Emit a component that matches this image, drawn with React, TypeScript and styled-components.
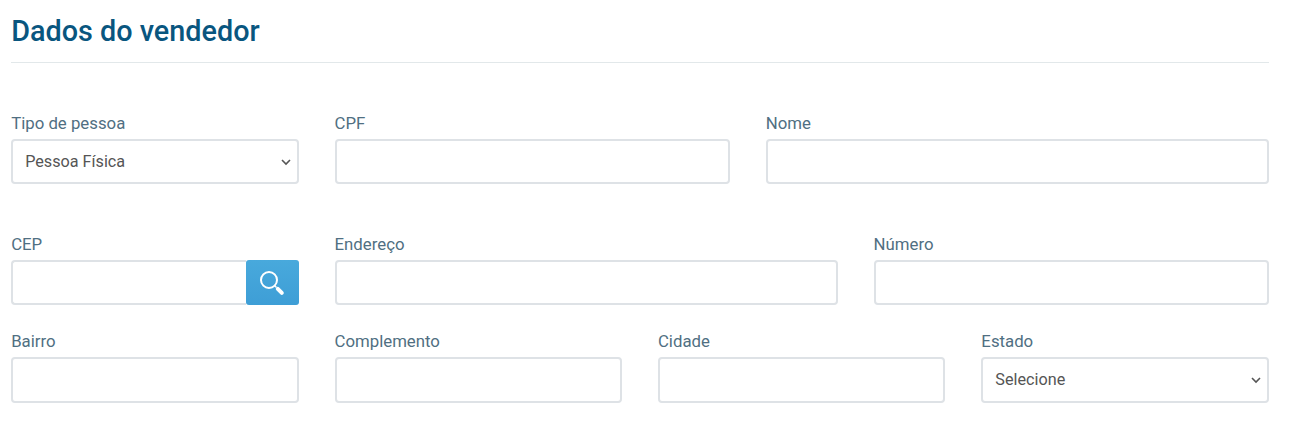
import React from "react";
import styled, { createGlobalStyle, css } from "styled-components";

const Global = createGlobalStyle`
  * { box-sizing: border-box; }
  body { margin: 0; background: #fff; font-family: Roboto, "Liberation Sans", sans-serif; }
`;

const Page = styled.main`
  width: 1294px;
  height: 445px;
  padding: 0 25.25px 0 11.15px;
  overflow: hidden;
`;

const Title = styled.h1`
  margin: 0;
  height: 63px;
  padding-top: 13px;
  border-bottom: 1px solid #e2e8ea;
  font-size: 28.8px;
  font-weight: 500;
  line-height: 36px;
  color: #09567f;
`;

const Row = styled.div<{ $top: number }>`
  display: grid;
  grid-template-columns: repeat(12, minmax(0, 1fr));
  column-gap: 36px;
  margin-top: ${(p) => p.$top}px;
`;

const Field = styled.div<{ $span: number }>`
  grid-column: span ${(p) => p.$span};
  display: flex;
  flex-direction: column;
  min-width: 0;
`;

const Label = styled.label`
  height: 27px;
  font-size: 16.8px;
  line-height: 22px;
  color: #506f82;
`;

const box = css`
  width: 100%;
  height: 45.4px;
  border: 2px solid #dee2e6;
  border-radius: 4px;
  background: #fff;
  font: 400 16.2px/24px Roboto, sans-serif;
  color: #555;
  outline: none;
`;

const Input = styled.input`
  ${box}
  padding: 0 12px;
`;

const SelectWrap = styled.div`
  display: grid;
  align-items: center;
  & > * { grid-area: 1 / 1; }
`;

const SelectBox = styled.select`
  ${box}
  appearance: none;
  padding: 0 12px;
`;

const Chevron = styled.svg`
  justify-self: end;
  margin-right: 8px;
  pointer-events: none;
`;

const SearchGroup = styled.div`
  display: flex;
`;

const GroupInput = styled(Input)`
  flex: 1;
  min-width: 0;
  border-right: 0;
  border-radius: 4px 0 0 4px;
`;

const SearchButton = styled.button`
  display: flex;
  align-items: center;
  justify-content: center;
  width: 53px;
  height: 45px;
  padding: 1px 1px 0 0;
  border: 0;
  border-radius: 3px;
  background: linear-gradient(#48a9dc, #3e9ed6);
`;

function TextField({ label, span }: { label: string; span: number }) {
  return (
    <Field $span={span}>
      <Label>{label}</Label>
      <Input aria-label={label} />
    </Field>
  );
}

function SelectField({ label, value, span }: { label: string; value: string; span: number }) {
  return (
    <Field $span={span}>
      <Label>{label}</Label>
      <SelectWrap>
        <SelectBox aria-label={label}>
          <option>{value}</option>
        </SelectBox>
        <Chevron width="10" height="8" viewBox="0 0 10 8" fill="none" stroke="#555" strokeWidth="1.6">
          <path d="M1 2l4 4 4-4" />
        </Chevron>
      </SelectWrap>
    </Field>
  );
}

export default function App() {
  return (
    <>
      <Global />
      <Page>
        <Title>Dados do vendedor</Title>
        <Row $top={49}>
          <SelectField label="Tipo de pessoa" value="Pessoa Física" span={3} />
          <TextField label="CPF" span={4} />
          <TextField label="Nome" span={5} />
        </Row>
        <Row $top={48.6}>
          <Field $span={3}>
            <Label>CEP</Label>
            <SearchGroup>
              <GroupInput aria-label="CEP" />
              <SearchButton aria-label="Buscar CEP">
                <svg width="26" height="26" viewBox="0 0 26 26" fill="none" stroke="#fff">
                  <circle cx="10" cy="10" r="8" strokeWidth="2" />
                  <path d="M15.5 15.5l2 2" strokeWidth="1.5" />
                  <path d="M18.8 18.8l4 4" strokeWidth="4" strokeLinecap="round" />
                </svg>
              </SearchButton>
            </SearchGroup>
          </Field>
          <TextField label="Endereço" span={5} />
          <TextField label="Número" span={4} />
        </Row>
        <Row $top={25}>
          <TextField label="Bairro" span={3} />
          <TextField label="Complemento" span={3} />
          <TextField label="Cidade" span={3} />
          <SelectField label="Estado" value="Selecione" span={3} />
        </Row>
      </Page>
    </>
  );
}
